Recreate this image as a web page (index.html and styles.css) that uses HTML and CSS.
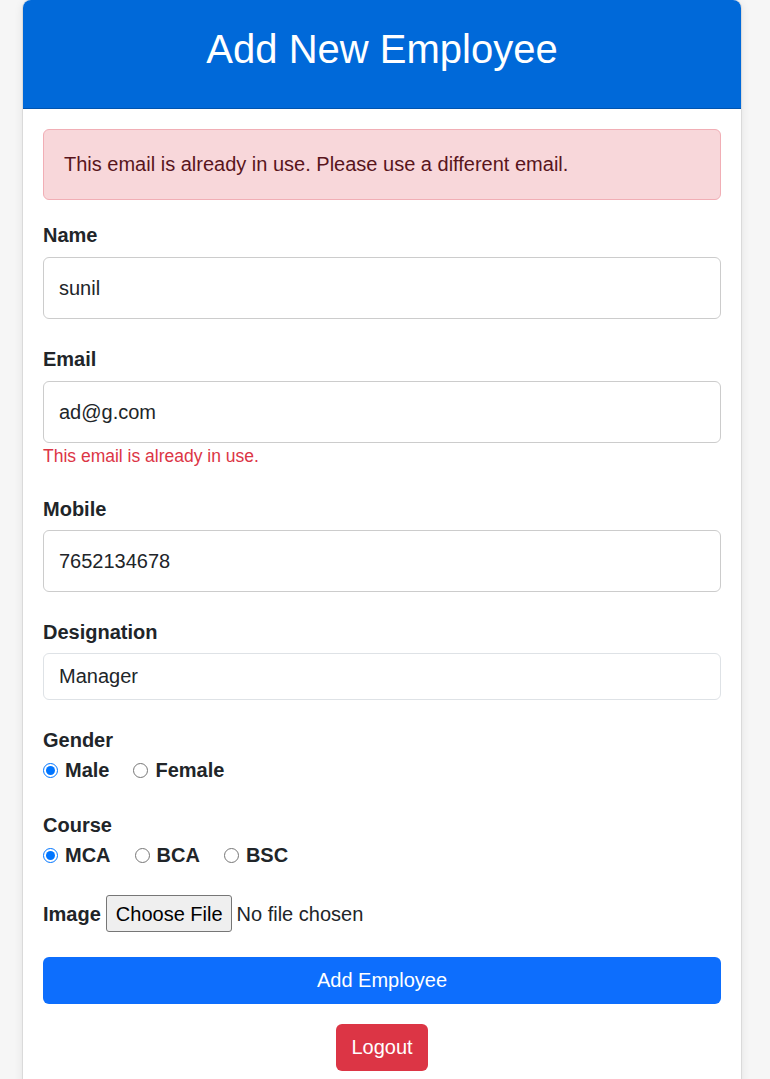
FILE: index.html
```html
<!DOCTYPE html>
<html lang="en">
<head>
<meta charset="utf-8">
<title>Add New Employee</title>
<link rel="stylesheet" href="styles.css">
</head>
<body>
<div class="card">
  <div class="card-header">
    <h2 class="title">Add New Employee</h2>
  </div>
  <div class="card-body">
    <div class="alert">This email is already in use. Please use a different email.</div>
    <form class="form">
      <div class="group">
        <label class="label">Name</label>
        <input class="field" type="text" value="sunil">
      </div>
      <div class="group">
        <label class="label">Email</label>
        <input class="field" type="text" value="ad@g.com">
        <div class="error">This email is already in use.</div>
      </div>
      <div class="group">
        <label class="label label-tight">Mobile</label>
        <input class="field" type="text" value="7652134678">
      </div>
      <div class="group">
        <label class="label label-tight">Designation</label>
        <div class="select">Manager</div>
      </div>
      <div class="group">
        <div class="label plain">Gender</div>
        <div class="options">
          <label class="option"><input type="radio" name="gender" checked>Male</label>
          <label class="option"><input type="radio" name="gender">Female</label>
        </div>
      </div>
      <div class="group">
        <div class="label plain">Course</div>
        <div class="options">
          <label class="option"><input type="radio" name="course" checked>MCA</label>
          <label class="option"><input type="radio" name="course">BCA</label>
          <label class="option"><input type="radio" name="course">BSC</label>
        </div>
      </div>
      <div class="group image-row">
        <span class="label plain">Image</span>
        <span class="file-btn">Choose File</span>
        <span class="file-text">No file chosen</span>
      </div>
      <button type="button" class="btn btn-primary">Add Employee</button>
      <div class="logout-row">
        <button type="button" class="btn btn-danger">Logout</button>
      </div>
    </form>
  </div>
</div>
</body>
</html>
```
FILE: styles.css
```css
* { box-sizing: border-box; }
html, body { margin: 0; padding: 0; }
body {
  background: #f6f6f6;
  font-family: "Liberation Sans", Arial, sans-serif;
  font-size: 20px;
  line-height: 30px;
  color: #212529;
}
.card {
  width: 718px;
  margin-left: 23px;
  background: #ffffff;
  border-radius: 8px 8px 0 0;
  box-shadow: 0 0 0 1px rgba(0,0,0,0.07), 0 2px 10px rgba(0,0,0,0.10);
  min-height: 1079px;
}
.card-header {
  background: #0069d9;
  border-radius: 8px 8px 0 0;
  border-bottom: 1px solid #0154ae;
  padding: 25px 0 35px;
  text-align: center;
}
.title {
  margin: 0;
  font-size: 40px;
  line-height: 48px;
  font-weight: 400;
  color: #ffffff;
}
.card-body {
  padding: 20px 20px;
}
.alert {
  background: #f8d7da;
  border: 1px solid #f1aeb5;
  color: #58151c;
  border-radius: 6px;
  padding: 20px 20px;
  line-height: 29px;
  margin-bottom: 20px;
}
.group { margin-bottom: 25px; }
.label {
  display: block;
  font-weight: 700;
  line-height: 30px;
  margin-bottom: 7px;
}
.label.label-tight { margin-bottom: 6px; }
.label.plain { margin-bottom: 0; }
.field {
  display: block;
  width: 100%;
  height: 62px;
  padding: 0 15px;
  border: 1px solid #cccccc;
  border-radius: 6px;
  font-family: inherit;
  font-size: 20px;
  color: #212529;
  background: #ffffff;
  margin: 0;
  outline: none;
}
.select {
  height: 47px;
  padding: 0 15px;
  border: 1px solid #dee2e6;
  border-radius: 6px;
  line-height: 45px;
}
.error {
  color: #dc3545;
  font-size: 17.5px;
  line-height: 26px;
}
.options {
  display: flex;
  gap: 24px;
}
.option {
  display: flex;
  align-items: center;
  font-weight: 700;
  line-height: 30px;
}
.option input {
  width: 15px;
  height: 15px;
  margin: 0 7px 0 0;
}
.image-row {
  display: flex;
  align-items: center;
  height: 37px;
}
.file-btn {
  display: inline-flex;
  align-items: center;
  height: 37px;
  margin-left: 5px;
  padding: 0 8px 0 9px;
  border: 1px solid #767676;
  border-radius: 3px;
  background: #efefef;
  color: #000000;
}
.file-text { margin-left: 5px; }
.btn {
  display: block;
  height: 47px;
  border: none;
  border-radius: 6px;
  font-family: inherit;
  font-size: 20px;
  color: #ffffff;
  cursor: pointer;
}
.btn-primary {
  width: 100%;
  background: #0d6efd;
}
.logout-row {
  display: flex;
  justify-content: center;
  margin-top: 20px;
}
.btn-danger {
  background: #dc3545;
  padding: 0 15px;
}
```
